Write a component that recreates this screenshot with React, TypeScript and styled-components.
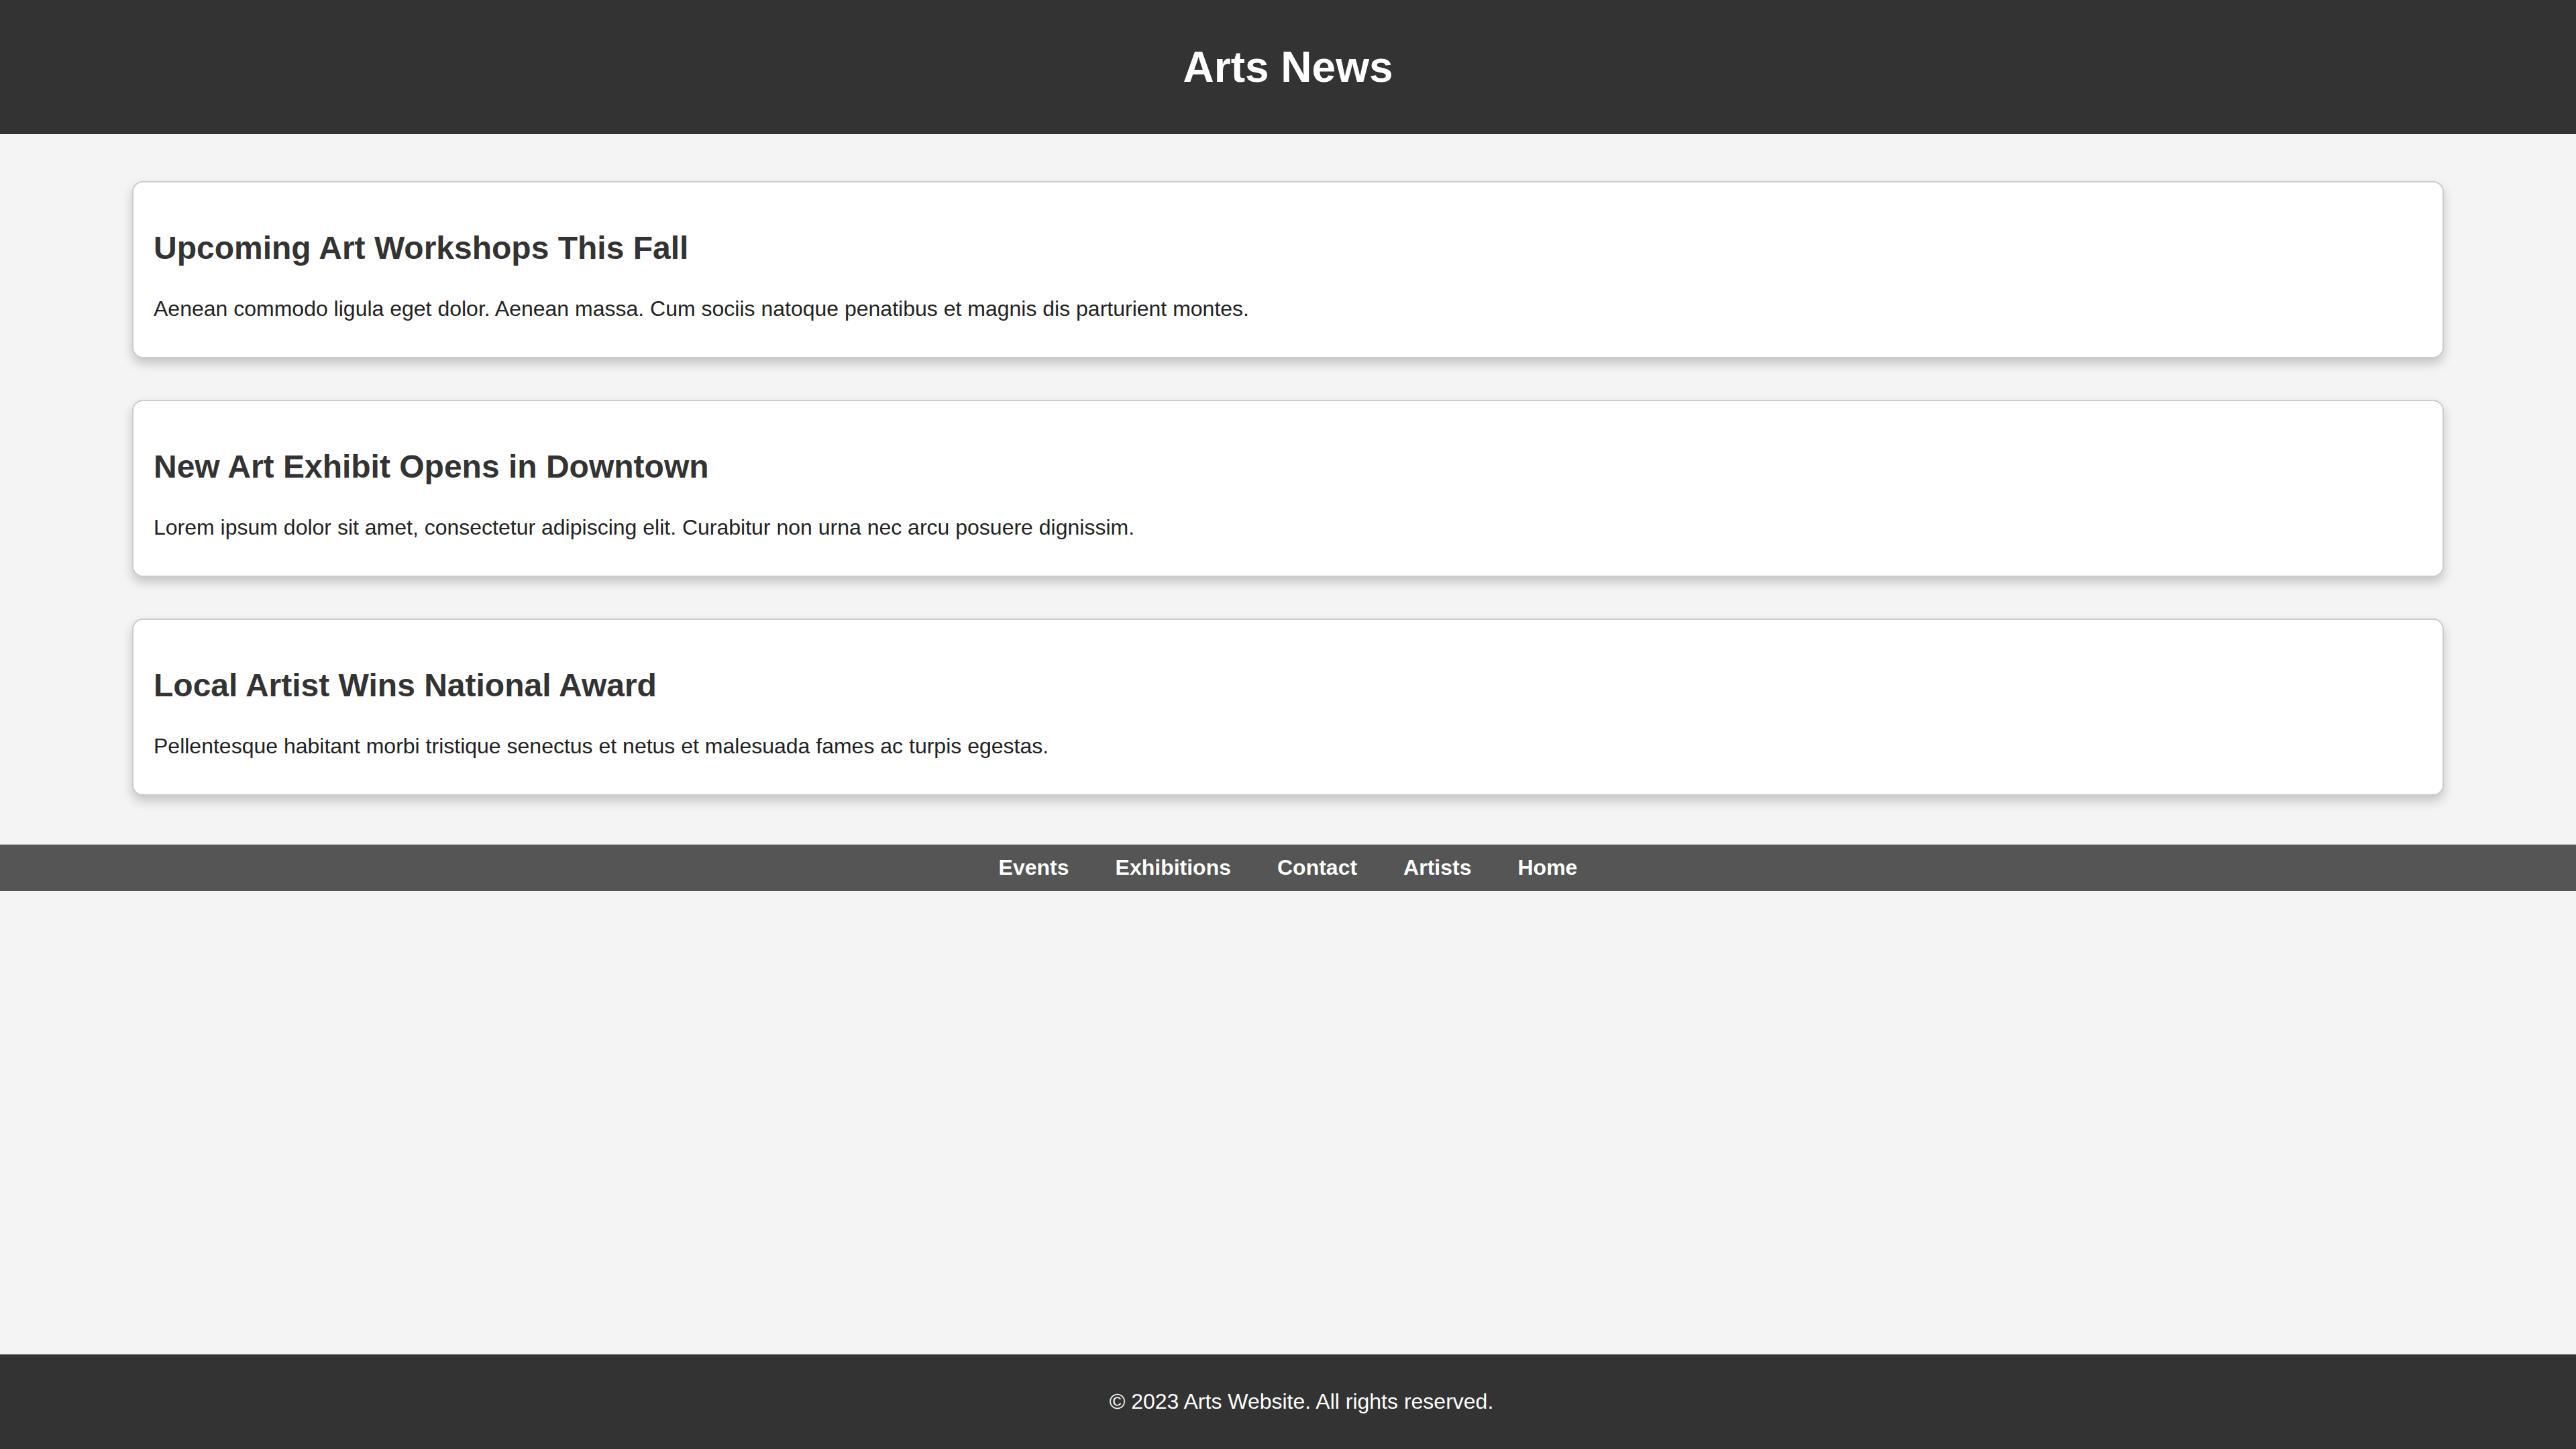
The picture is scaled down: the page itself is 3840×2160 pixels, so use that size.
import React from "react";
import styled, { createGlobalStyle } from "styled-components";

const GlobalStyle = createGlobalStyle`
  html, body {
    margin: 0;
    padding: 0;
  }
  body {
    background: #f4f4f4;
    font-family: "Liberation Sans", Arial, Helvetica, sans-serif;
    color: #222;
  }
  #root {
    min-height: 100vh;
    display: flex;
    flex-direction: column;
  }
`;

const Header = styled.header`
  background: #333;
  color: #fff;
  padding: 20px;
  text-align: center;
`;

const Title = styled.h1`
  margin: 43px 0;
  font-size: 64px;
  font-weight: bold;
  line-height: normal;
`;

const Main = styled.main`
  display: flex;
  flex-direction: column;
  gap: 62px;
  padding: 70px 197px 73px;
`;

const Card = styled.article`
  background: #fff;
  border: 2px solid #ccc;
  border-radius: 16px;
  box-shadow: 0 8px 16px rgba(0, 0, 0, 0.2);
  padding: 30px;
`;

const CardTitle = styled.h2`
  margin: 40px 0 45px;
  font-size: 48px;
  font-weight: bold;
  color: #333;
  line-height: normal;
`;

const CardText = styled.p`
  margin: 0 0 23px;
  font-size: 32px;
  color: #222;
  line-height: normal;
`;

const Nav = styled.nav`
  background: #555;
  padding: 16px 0;
  display: flex;
  justify-content: center;
`;

const NavList = styled.ul`
  list-style: none;
  margin: 0;
  padding: 0;
  display: flex;
  gap: 69px;
`;

const NavLink = styled.a`
  color: #fff;
  font-size: 32px;
  font-weight: bold;
  text-decoration: none;
  line-height: normal;
`;

const Footer = styled.footer`
  margin-top: auto;
  background: #333;
  color: #fff;
  text-align: center;
  padding: 20px 0 20px 40px;
`;

const FooterText = styled.p`
  margin: 32px 0;
  font-size: 32px;
  line-height: normal;
`;

const articles = [
  {
    title: "Upcoming Art Workshops This Fall",
    text: "Aenean commodo ligula eget dolor. Aenean massa. Cum sociis natoque penatibus et magnis dis parturient montes.",
  },
  {
    title: "New Art Exhibit Opens in Downtown",
    text: "Lorem ipsum dolor sit amet, consectetur adipiscing elit. Curabitur non urna nec arcu posuere dignissim.",
  },
  {
    title: "Local Artist Wins National Award",
    text: "Pellentesque habitant morbi tristique senectus et netus et malesuada fames ac turpis egestas.",
  },
];

const links = ["Events", "Exhibitions", "Contact", "Artists", "Home"];

export default function App() {
  return (
    <>
      <GlobalStyle />
      <Header>
        <Title>Arts News</Title>
      </Header>
      <Main>
        {articles.map((a) => (
          <Card key={a.title}>
            <CardTitle>{a.title}</CardTitle>
            <CardText>{a.text}</CardText>
          </Card>
        ))}
      </Main>
      <Nav>
        <NavList>
          {links.map((l) => (
            <li key={l}>
              <NavLink href="#">{l}</NavLink>
            </li>
          ))}
        </NavList>
      </Nav>
      <Footer>
        <FooterText>© 2023 Arts Website. All rights reserved.</FooterText>
      </Footer>
    </>
  );
}
